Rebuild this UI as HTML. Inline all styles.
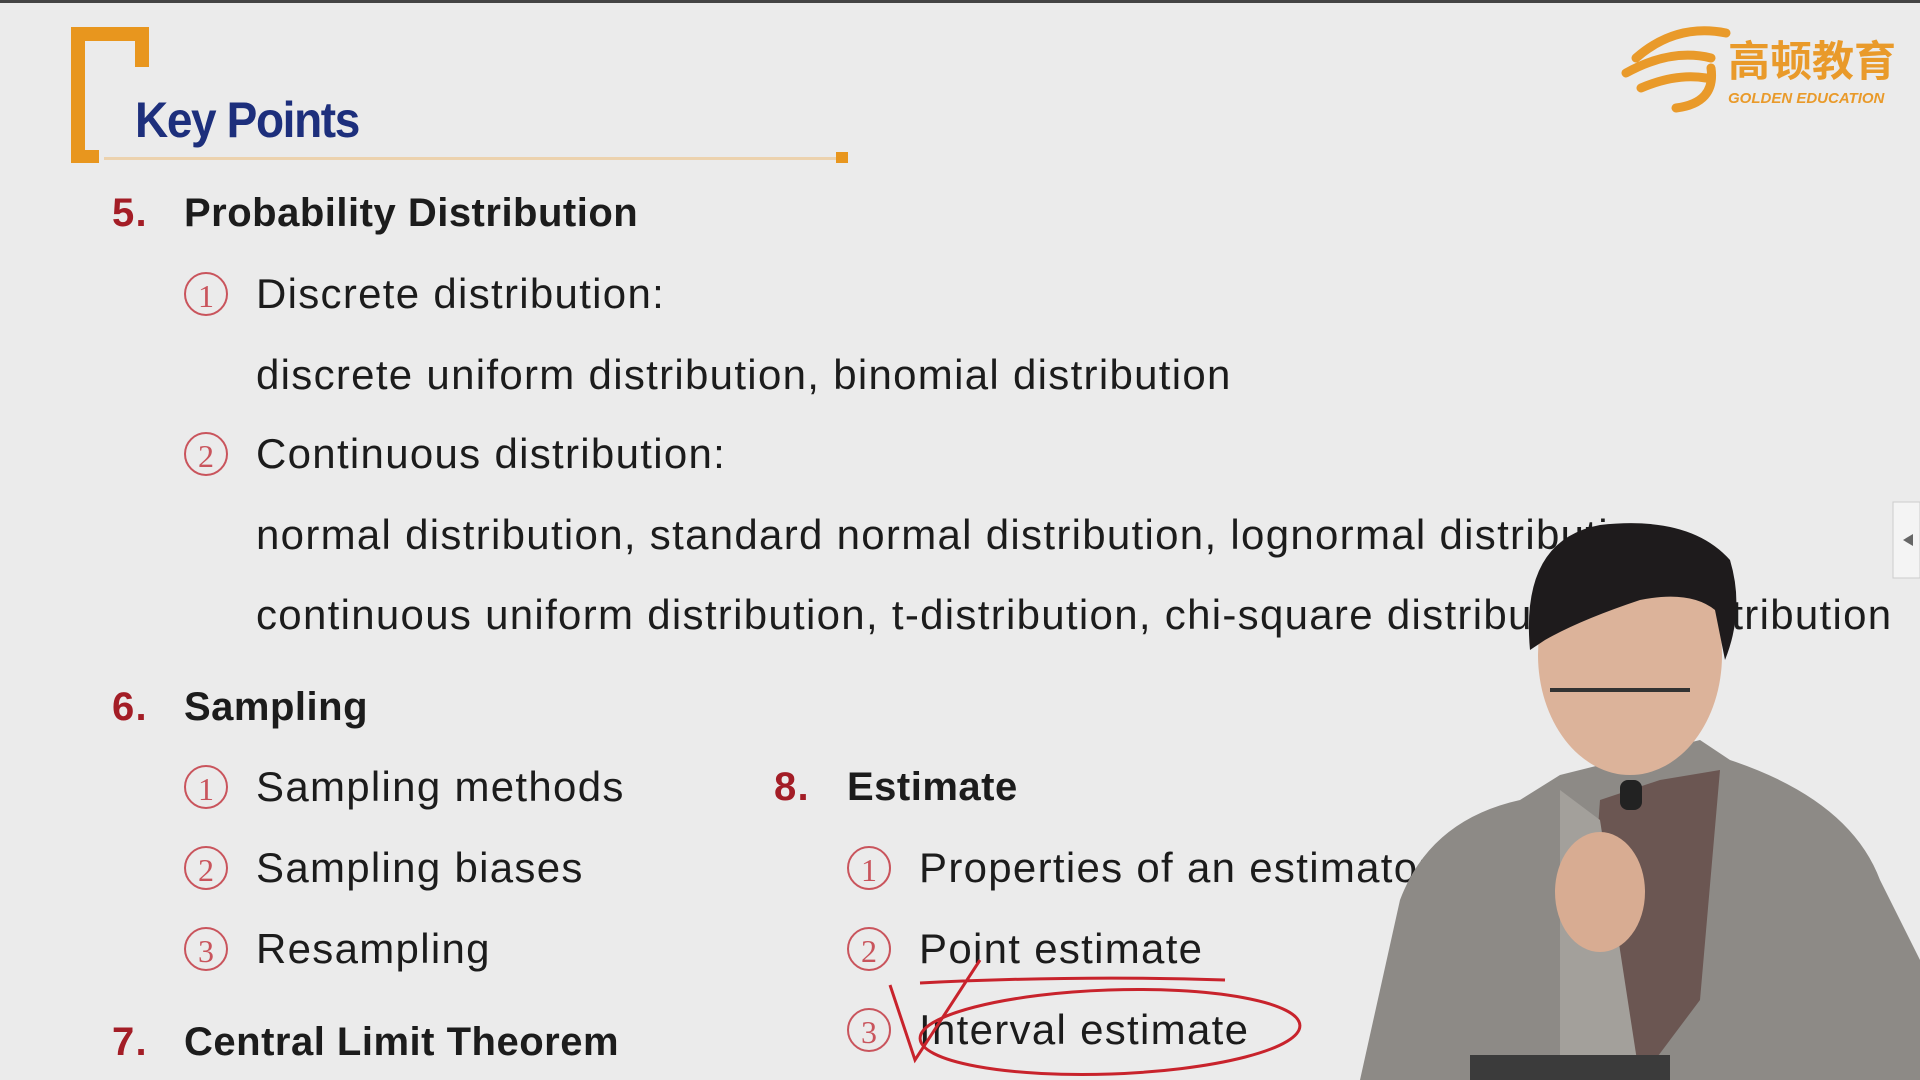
<!DOCTYPE html>
<html><head><meta charset="utf-8"><style>
body{margin:0;width:1920px;height:1080px;overflow:hidden;background:#ebebeb;font-family:"Liberation Sans","Noto Sans CJK SC",sans-serif;position:relative}
.t{position:absolute;white-space:nowrap;color:#1c1c1c;font-size:42px;line-height:48px;letter-spacing:1.3px}
.b{font-weight:bold;font-size:40px;letter-spacing:.5px}
.n{color:#a31d26;font-weight:bold;font-size:40px}
.c{position:absolute;width:44px;height:44px;border:2px solid #c9545c;border-radius:50%;color:#c9545c;font-family:"Liberation Serif",serif;font-size:32px;line-height:44px;text-align:center;box-sizing:border-box;letter-spacing:0}
</style></head><body>
<div style="position:absolute;left:0;top:0;width:1920px;height:3px;background:#444"></div>
<div style="position:absolute;left:71px;top:27px;width:78px;height:136px;border-left:14px solid #e8961e;border-top:14px solid #e8961e;box-sizing:border-box"></div>
<div style="position:absolute;left:135px;top:27px;width:14px;height:40px;background:#e8961e"></div>
<div style="position:absolute;left:85px;top:150px;width:14px;height:13px;background:#e8961e"></div>
<div style="position:absolute;left:104px;top:157px;width:736px;height:3px;background:#ecd2ae"></div>
<div style="position:absolute;left:836px;top:152px;width:12px;height:11px;background:#e8961e"></div>
<div class="t" style="left:135px;top:92px;font-size:50px;line-height:56px;font-weight:bold;color:#1d2f7c;letter-spacing:-1.5px;transform:scaleX(.92);transform-origin:left">Key Points</div>
<svg style="position:absolute;left:1616px;top:18px" width="300" height="100">
<path d="M20 40 Q60 5 110 15 M10 55 Q55 30 95 40 M25 70 Q60 55 90 60 M60 90 Q100 85 95 50" stroke="#e99a2a" stroke-width="9" fill="none" stroke-linecap="round"/>
<text x="112" y="58" font-size="42" font-weight="bold" fill="#e99a2a" font-family="Noto Sans CJK SC,sans-serif">高顿教育</text>
<text x="112" y="85" font-size="15" font-style="italic" font-weight="bold" fill="#e99a2a" font-family="Liberation Sans,sans-serif">GOLDEN EDUCATION</text>
</svg>
<div class="t n" style="left:112px;top:189px">5.</div>
<div class="t b" style="left:184px;top:189px">Probability Distribution</div>
<div class="c" style="left:184px;top:272px">1</div>
<div class="t" style="left:256px;top:270px">Discrete distribution:</div>
<div class="t" style="left:256px;top:351px">discrete uniform distribution, binomial distribution</div>
<div class="c" style="left:184px;top:432px">2</div>
<div class="t" style="left:256px;top:430px">Continuous distribution:</div>
<div class="t" style="left:256px;top:511px">normal distribution, standard normal distribution, lognormal distribution,</div>
<div class="t" style="left:256px;top:591px">continuous uniform distribution, t-distribution, chi-square distribution, F-distribution</div>
<div class="t n" style="left:112px;top:683px">6.</div>
<div class="t b" style="left:184px;top:683px">Sampling</div>
<div class="c" style="left:184px;top:765px">1</div>
<div class="t" style="left:256px;top:763px">Sampling methods</div>
<div class="c" style="left:184px;top:846px">2</div>
<div class="t" style="left:256px;top:844px">Sampling biases</div>
<div class="c" style="left:184px;top:927px">3</div>
<div class="t" style="left:256px;top:925px">Resampling</div>
<div class="t n" style="left:112px;top:1018px">7.</div>
<div class="t b" style="left:184px;top:1018px">Central Limit Theorem</div>
<div class="t n" style="left:774px;top:763px">8.</div>
<div class="t b" style="left:847px;top:763px">Estimate</div>
<div class="c" style="left:847px;top:846px">1</div>
<div class="t" style="left:919px;top:844px">Properties of an estimator</div>
<div class="c" style="left:847px;top:927px">2</div>
<div class="t" style="left:919px;top:925px">Point estimate</div>
<div class="c" style="left:847px;top:1008px">3</div>
<div class="t" style="left:919px;top:1006px">Interval estimate</div>
<svg style="position:absolute;left:0;top:0" width="1920" height="1080">
<ellipse cx="1110" cy="1032" rx="190" ry="42" fill="none" stroke="#c8232c" stroke-width="3" transform="rotate(-2 1110 1032)"/>
<path d="M890 985 L915 1060 L980 960 M920 983 Q1080 975 1225 980" fill="none" stroke="#c8232c" stroke-width="3"/>
<rect x="1893" y="502" width="27" height="76" fill="#f4f4f4" stroke="#ccc"/>
<path d="M1903 540 L1913 534 L1913 546Z" fill="#666"/>
<path d="M1360 1080 L1400 900 Q1430 820 1520 800 L1560 775 L1700 740 L1730 760 Q1850 800 1880 880 L1920 960 L1920 1080Z" fill="#8d8a86"/>
<path d="M1600 800 L1660 780 L1720 770 L1700 1000 L1640 1080 L1580 1080Z" fill="#6b5652"/>
<path d="M1560 790 L1600 820 L1640 1080 L1560 1080Z" fill="#a3a09b"/>
<ellipse cx="1630" cy="655" rx="92" ry="120" fill="#dcb39a"/>
<path d="M1530 650 Q1520 540 1600 525 Q1690 515 1730 560 Q1745 610 1725 660 L1715 610 Q1690 590 1640 600 Q1580 620 1545 640Z" fill="#1e1b1c"/>
<path d="M1550 690 L1690 690" stroke="#333" stroke-width="4"/>
<ellipse cx="1600" cy="892" rx="45" ry="60" fill="#d8ac92"/>
<rect x="1620" y="780" width="22" height="30" rx="8" fill="#222"/>
<rect x="1470" y="1055" width="200" height="25" fill="#3b3b3b"/>
</svg>
</body></html>
